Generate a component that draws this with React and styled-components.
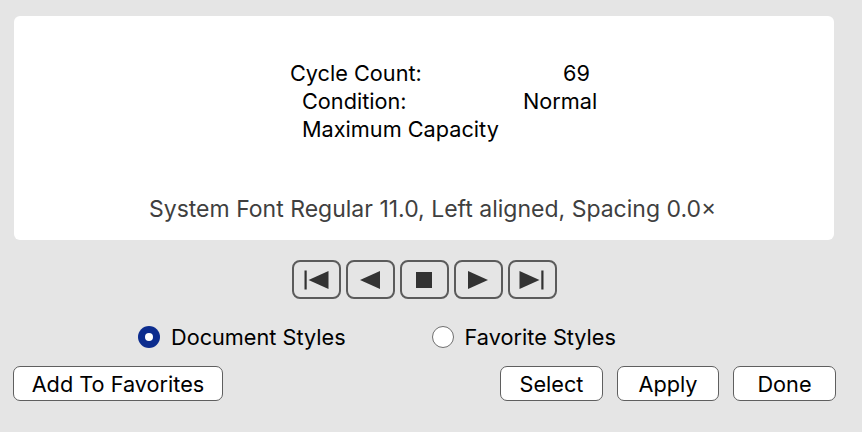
import React from "react";
import styled, { createGlobalStyle } from "styled-components";

const Global = createGlobalStyle`
  html, body { margin: 0; padding: 0; background: #e5e5e5; }
  body { font-family: Inter, "Liberation Sans", sans-serif; color: #000; }
`;

const Window = styled.div`
  width: 862px;
  height: 432px;
  box-sizing: border-box;
  padding: 16px 28px 0 14px;
  display: flex;
  flex-direction: column;
`;

const Panel = styled.div`
  height: 224px;
  background: #fff;
  border-radius: 6px;
  display: flex;
  flex-direction: column;
  padding-top: 43px;
  box-sizing: border-box;
`;

const Info = styled.div`
  display: flex;
  flex-direction: column;
  font-size: 21.7px;
  line-height: 28px;
`;

const Row = styled.div`
  display: flex;
  padding-left: ${(p) => p.$indent}px;
`;

const Label = styled.span`
  width: ${(p) => p.$width}px;
  white-space: nowrap;
`;

const Value = styled.span`
  white-space: nowrap;
`;

const Footer = styled.div`
  margin-top: auto;
  margin-bottom: 17px;
  padding-left: 135px;
  font-size: 23px;
  line-height: 28px;
  color: #3f3f3f;
  white-space: nowrap;
`;

const MediaBar = styled.div`
  display: flex;
  justify-content: center;
  gap: 5px;
  margin-top: 20px;
`;

const MediaButton = styled.button`
  width: 49px;
  height: 39px;
  box-sizing: border-box;
  border: 2px solid #5b5b5b;
  border-radius: 8px;
  background: #e5e5e5;
  padding: 0;
  display: flex;
  align-items: center;
  justify-content: center;
  color: #333;
`;

const RadioRow = styled.div`
  display: flex;
  align-items: center;
  margin-top: 26px;
  padding-left: 124px;
  font-size: 21.7px;
  height: 24px;
`;

const RadioItem = styled.label`
  display: flex;
  align-items: center;
  gap: 11px;
  margin-right: ${(p) => p.$gap || 0}px;
  white-space: nowrap;
`;

const RadioDot = styled.span`
  width: 22px;
  height: 22px;
  box-sizing: border-box;
  border-radius: 50%;
  display: flex;
  align-items: center;
  justify-content: center;
  background: ${(p) => (p.$on ? "#0c2c8e" : "#fff")};
  border: ${(p) => (p.$on ? "none" : "1.5px solid #6f6f6f")};
  &::after {
    content: "";
    width: 8px;
    height: 8px;
    border-radius: 50%;
    background: #fff;
    display: ${(p) => (p.$on ? "block" : "none")};
  }
`;

const ButtonRow = styled.div`
  display: flex;
  align-items: center;
  margin-top: 17px;
  margin-left: -1px;
  margin-right: -3px;
  gap: 14px;
`;

const PushButton = styled.button`
  flex-shrink: 0;
  height: 35px;
  width: ${(p) => p.$w}px;
  margin-left: ${(p) => p.$ml || 0}px;
  box-sizing: border-box;
  background: #fff;
  border: 1.5px solid #5f5f5f;
  border-radius: 7px;
  font-family: Inter, "Liberation Sans", sans-serif;
  font-size: 21.7px;
  color: #000;
  padding: 0;
  white-space: nowrap;
`;

const Icon = ({ kind }) => {
  const c = "#333";
  return (
    <svg width="26" height="26" viewBox="0 0 26 26">
      {kind === "first" && (
        <>
          <rect x="1.5" y="3.5" width="2.2" height="19" fill={c} />
          <polygon points="5.5,13 25.5,4 25.5,22" fill={c} />
        </>
      )}
      {kind === "prev" && <polygon points="3,13 23,4 23,22" fill={c} />}
      {kind === "stop" && <rect x="5" y="5" width="16" height="16" fill={c} />}
      {kind === "next" && <polygon points="3,4 23,13 3,22" fill={c} />}
      {kind === "last" && (
        <>
          <polygon points="0.5,4 20.5,13 0.5,22" fill={c} />
          <rect x="22.3" y="3.5" width="2.2" height="19" fill={c} />
        </>
      )}
    </svg>
  );
};

export default function App() {
  return (
    <>
      <Global />
      <Window>
        <Panel>
          <Info>
            <Row $indent={276}>
              <Label $width={273}>Cycle Count:</Label>
              <Value>69</Value>
            </Row>
            <Row $indent={288}>
              <Label $width={221}>Condition:</Label>
              <Value>Normal</Value>
            </Row>
            <Row $indent={288}>
              <Label>Maximum Capacity</Label>
            </Row>
          </Info>
          <Footer>System Font Regular 11.0, Left aligned, Spacing 0.0×</Footer>
        </Panel>
        <MediaBar>
          {["first", "prev", "stop", "next", "last"].map((k) => (
            <MediaButton key={k}>
              <Icon kind={k} />
            </MediaButton>
          ))}
        </MediaBar>
        <RadioRow>
          <RadioItem $gap={86}>
            <RadioDot $on />
            Document Styles
          </RadioItem>
          <RadioItem>
            <RadioDot />
            Favorite Styles
          </RadioItem>
        </RadioRow>
        <ButtonRow>
          <PushButton $w={210}>Add To Favorites</PushButton>
          <PushButton $w={103} $ml={263}>Select</PushButton>
          <PushButton $w={102}>Apply</PushButton>
          <PushButton $w={103}>Done</PushButton>
        </ButtonRow>
      </Window>
    </>
  );
}
